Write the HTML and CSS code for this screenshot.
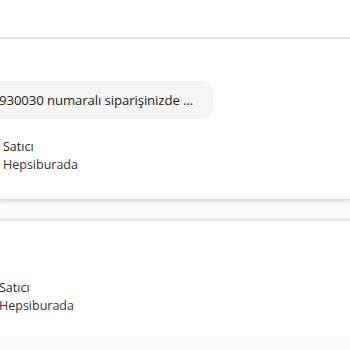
FILE: index.html
```html
<!DOCTYPE html>
<html lang="tr">
<head>
<meta charset="utf-8">
<link rel="stylesheet" href="styles.css">
</head>
<body>
<div class="page">
  <div class="top"></div>
  <section class="card card-first">
    <div class="bubble"><span class="msg">930030 numaralı siparişinizde ...</span></div>
    <div class="seller seller-a">
      <div class="label">Satıcı</div>
      <div class="name">Hepsiburada</div>
    </div>
  </section>
  <section class="card card-second">
    <div class="seller seller-b">
      <div class="label">Satıcı</div>
      <div class="name">Hepsiburada</div>
    </div>
  </section>
</div>
</body>
</html>
```
FILE: styles.css
```css
html, body {
  margin: 0;
  padding: 0;
  background: #fafafa;
  font-family: "Open Sans", "Noto Sans", sans-serif;
  color: #333;
}
.page {
  display: flex;
  flex-direction: column;
  width: 350px;
}
.top {
  height: 37px;
  background: #fff;
  border-bottom: 2px solid #e6e6e6;
}
.card {
  background: #fff;
  box-shadow: 0 2px 4px rgba(0, 0, 0, 0.16);
  display: flex;
  flex-direction: column;
}
.card-first {
  height: 160px;
  padding-top: 42px;
  box-sizing: border-box;
}
.card-second {
  margin-top: 20px;
  border-top: 2px solid #e6e6e6;
  height: 117px;
  padding-top: 58px;
  box-sizing: border-box;
}
.bubble {
  width: 253px;
  height: 38px;
  margin-left: -40px;
  background: #f5f5f5;
  border-radius: 10px;
  display: flex;
  align-items: center;
  padding-left: 39px;
  box-sizing: border-box;
}
.msg {
  font-size: 13.2px;
  color: #222;
  white-space: nowrap;
  letter-spacing: -0.1px;
}
.seller {
  display: flex;
  flex-direction: column;
  font-size: 12.5px;
  line-height: 18px;
}
.seller-a {
  margin-top: 19px;
  padding-left: 3px;
}
.seller-b {
  margin-left: -1px;
}
.label {
  color: #1f1f1f;
}
.name {
  color: #333;
}
```
